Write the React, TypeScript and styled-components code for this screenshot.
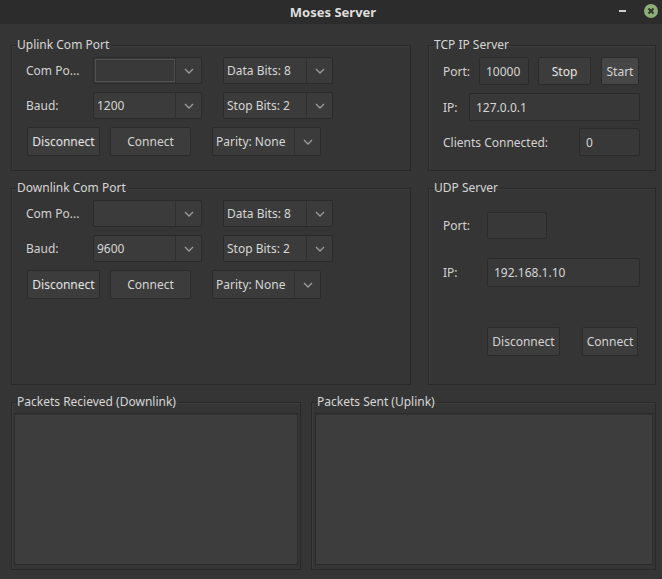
import React from 'react';
import styled, { createGlobalStyle } from 'styled-components';

const Global = createGlobalStyle`
  html, body { margin: 0; padding: 0; background: #353535; }
  body { font-family: "Noto Sans", "Open Sans", sans-serif; font-size: 12px; color: #d4d4d4; }
  * { box-sizing: border-box; }
`;

const Window = styled.div`
  width: 662px;
  height: 579px;
  display: flex;
  flex-direction: column;
  background: #353535;
  overflow: hidden;
`;

const TitleBar = styled.div`
  height: 24px;
  flex: none;
  background: #2c2c2c;
  display: grid;
  grid-template-columns: 1fr auto 1fr;
  align-items: center;
`;

const TitleText = styled.div`
  grid-column: 2;
  font-weight: 700;
  font-size: 13px;
  color: #dedede;
  padding-left: 4px;
`;

const TitleControls = styled.div`
  grid-column: 3;
  display: flex;
  justify-content: flex-end;
  align-items: center;
  gap: 18px;
  padding-right: 4px;
`;

const MinBtn = styled.div`
  width: 7px;
  height: 2px;
  background: #cfcfcf;
  margin-top: -2px;
`;

const CloseBtn = styled.div`
  width: 14px;
  height: 14px;
  border-radius: 50%;
  background: #8fad77;
  display: flex;
  align-items: center;
  justify-content: center;
  margin-top: -2px;
`;

const Body = styled.div`
  flex: 1;
  display: grid;
  grid-template-columns: 400px 228px;
  grid-template-rows: 135px 206px 177px;
  column-gap: 17px;
  row-gap: 8px;
  padding: 12px 6px 9px 11px;
`;

const BottomRow = styled.div`
  grid-column: 1 / span 2;
  display: grid;
  grid-template-columns: 290px 1fr;
  column-gap: 10px;
`;

const Group = styled.fieldset`
  margin: 0;
  min-width: 0;
  border: 1px solid #292929;
  box-shadow: inset 1px 1px 0 #3d3d3d;
  padding: 0;
  display: flex;
  flex-direction: column;
`;

const Legend = styled.legend`
  margin-left: 5px;
  padding: 0 2px 0 0;
  line-height: 18px;
  height: 18px;
  font-size: 12px;
  color: #d6d6d6;
`;

const Content = styled.div<{ $pad?: string }>`
  flex: 1;
  display: flex;
  flex-direction: column;
  padding: ${(p) => p.$pad ?? '3px 8px 0 14px'};
`;

const Row = styled.div<{ $h?: number; $mt?: number }>`
  display: flex;
  align-items: center;
  height: ${(p) => p.$h ?? 27}px;
  margin-top: ${(p) => p.$mt ?? 0}px;
  flex: none;
`;

const Label = styled.span<{ $w: number }>`
  width: ${(p) => p.$w}px;
  flex: none;
  white-space: nowrap;
  color: #d2d2d2;
`;

const Gap = styled.div<{ $w: number }>`
  width: ${(p) => p.$w}px;
  flex: none;
`;

const ComboBox = styled.div<{ $w: number }>`
  width: ${(p) => p.$w}px;
  height: 100%;
  flex: none;
  display: flex;
  background: #3b3b3b;
  border: 1px solid #2b2b2b;
  border-radius: 2px;
`;

const ComboValue = styled.div<{ $edit?: boolean }>`
  flex: 1;
  display: flex;
  align-items: center;
  padding-left: 3px;
  margin: ${(p) => (p.$edit ? '1px 0 1px 1px' : '0')};
  border: ${(p) => (p.$edit ? '1px solid #4f4f4f' : 'none')};
  background: ${(p) => (p.$edit ? '#393939' : 'transparent')};
  color: #d6d6d6;
  white-space: nowrap;
  overflow: hidden;
`;

const ComboArrow = styled.div`
  width: 26px;
  flex: none;
  border-left: 1px solid #303030;
  display: flex;
  align-items: center;
  justify-content: center;
`;

const Button = styled.div<{ $w: number; $light?: boolean; $disabled?: boolean }>`
  width: ${(p) => p.$w}px;
  height: 100%;
  flex: none;
  display: flex;
  align-items: center;
  justify-content: center;
  background: ${(p) => (p.$light ? '#464646' : '#3c3c3c')};
  border: 1px solid #2b2b2b;
  border-radius: 2px;
  color: ${(p) => (p.$disabled ? '#e2e2e2' : '#d4d4d4')};
  text-shadow: ${(p) => (p.$disabled ? '1px 1px 0 #464646' : 'none')};
  white-space: nowrap;
`;

const Field = styled.div<{ $w: number }>`
  width: ${(p) => p.$w}px;
  height: 100%;
  flex: none;
  display: flex;
  align-items: center;
  padding-left: 6px;
  background: #383838;
  border: 1px solid #2b2b2b;
  border-radius: 2px;
  color: #d6d6d6;
`;

const TextArea = styled.div`
  flex: 1;
  background: #3d3d3d;
  border: 1px solid #2b2b2b;
  box-shadow: inset 0 1px 0 #333;
`;

const Chevron = () => (
  <svg width="10" height="6" viewBox="0 0 10 6">
    <path d="M1 1 L5 5 L9 1" fill="none" stroke="#9c9c9c" strokeWidth="1.3" />
  </svg>
);

const Combo = ({ w, value, edit }: { w: number; value?: string; edit?: boolean }) => (
  <ComboBox $w={w}>
    <ComboValue $edit={edit}>{value}</ComboValue>
    <ComboArrow>
      <Chevron />
    </ComboArrow>
  </ComboBox>
);

const ComPortGroup = ({ title, baud, edit }: { title: string; baud: string; edit?: boolean }) => (
  <Group>
    <Legend>{title}</Legend>
    <Content>
      <Row>
        <Label $w={67}>Com Po...</Label>
        <Combo w={109} edit={edit} />
        <Gap $w={21} />
        <Combo w={110} value="Data Bits: 8" />
      </Row>
      <Row $mt={8}>
        <Label $w={67}>Baud:</Label>
        <Combo w={109} value={baud} />
        <Gap $w={21} />
        <Combo w={110} value="Stop Bits: 2" />
      </Row>
      <Row $mt={8} $h={29}>
        <Gap $w={1} />
        <Button $w={73} $disabled>Disconnect</Button>
        <Gap $w={10} />
        <Button $w={81}>Connect</Button>
        <Gap $w={21} />
        <Combo w={109} value="Parity: None" />
      </Row>
    </Content>
  </Group>
);

export default function App() {
  return (
    <>
      <Global />
      <Window>
        <TitleBar>
          <TitleText>Moses Server</TitleText>
          <TitleControls>
            <MinBtn />
            <CloseBtn>
              <svg width="8" height="8" viewBox="0 0 8 8">
                <path d="M1.5 1.5 L6.5 6.5 M6.5 1.5 L1.5 6.5" stroke="#2b3324" strokeWidth="1.8" />
              </svg>
            </CloseBtn>
          </TitleControls>
        </TitleBar>
        <Body>
          <ComPortGroup title="Uplink Com Port" baud="1200" edit />
          <Group>
            <Legend>TCP IP Server</Legend>
            <Content>
              <Row $h={28}>
                <Label $w={36}>Port:</Label>
                <Field $w={50}>10000</Field>
                <Gap $w={9} />
                <Button $w={53} $disabled>Stop</Button>
                <Gap $w={10} />
                <Button $w={38} $light>Start</Button>
              </Row>
              <Row $h={28} $mt={8}>
                <Label $w={26}>IP:</Label>
                <Field $w={171}>127.0.0.1</Field>
              </Row>
              <Row $h={28} $mt={7}>
                <Label $w={136}>Clients Connected:</Label>
                <Field $w={61}>0</Field>
              </Row>
            </Content>
          </Group>
          <ComPortGroup title="Downlink Com Port" baud="9600" />
          <Group>
            <Legend>UDP Server</Legend>
            <Content>
              <Row $h={27} $mt={12}>
                <Label $w={44}>Port:</Label>
                <Field $w={60} />
              </Row>
              <Row $h={29} $mt={19}>
                <Label $w={44}>IP:</Label>
                <Field $w={153}>192.168.1.10</Field>
              </Row>
              <Row $h={29} $mt={40}>
                <Gap $w={44} />
                <Button $w={73}>Disconnect</Button>
                <Gap $w={22} />
                <Button $w={56}>Connect</Button>
              </Row>
            </Content>
          </Group>
          <BottomRow>
            <Group>
              <Legend>Packets Recieved (Downlink)</Legend>
              <Content $pad="2px 2px 4px 2px">
                <TextArea />
              </Content>
            </Group>
            <Group>
              <Legend>Packets Sent (Uplink)</Legend>
              <Content $pad="2px 2px 4px 3px">
                <TextArea />
              </Content>
            </Group>
          </BottomRow>
        </Body>
      </Window>
    </>
  );
}
